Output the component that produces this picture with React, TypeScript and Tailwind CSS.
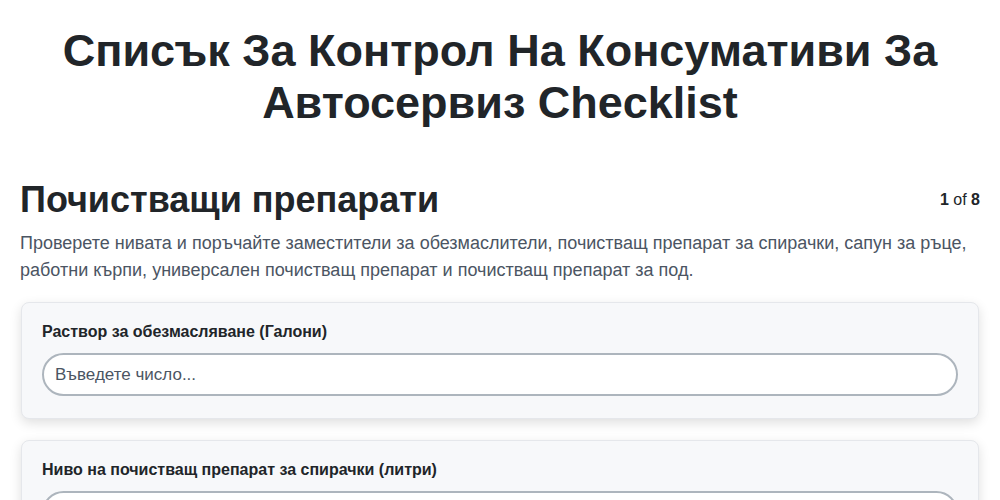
import React from "react";

function Field({ label }: { label: string }) {
  return (
    <div className="rounded-lg border border-[#e5e7eb] bg-[#f7f8fa] px-5 pt-[18px] pb-[22px] shadow-[0_4px_12px_rgba(0,0,0,0.13)]">
      <label className="block text-[16px] font-bold text-[#212529] leading-[22px] mb-[10px]">{label}</label>
      <input
        type="text"
        placeholder="Въведете число..."
        className="w-full h-[43px] rounded-full border-2 border-[#adb5bd] bg-white px-[11px] text-[17px] text-[#212529] placeholder:text-[#4b5563] outline-none"
      />
    </div>
  );
}

export default function App() {
  return (
    <div className="min-h-screen bg-white text-[#212529]" style={{ fontFamily: '"Liberation Sans", Arial, sans-serif' }}>
      <h1 className="pt-[25px] px-12 text-center text-[45px] font-bold leading-[52px]">
        Списък За Контрол На Консумативи За Автосервиз Checklist
      </h1>
      <div className="px-5 pt-[49px]">
        <div className="flex items-center justify-between">
          <h2 className="text-[36px] font-bold leading-[44px]">Почистващи препарати</h2>
          <div className="text-[16px] text-[#212529]"><b>1</b> of <b>8</b></div>
        </div>
        <p className="mt-[8px] text-[18px] leading-[27px] text-[#4b5563]">
          Проверете нивата и поръчайте заместители за обезмаслители, почистващ препарат за спирачки, сапун за ръце, работни кърпи, универсален почистващ препарат и почистващ препарат за под.
        </p>
        <div className="mt-[18px] px-px flex flex-col gap-[21px] pb-10">
          <Field label="Раствор за обезмасляване (Галони)" />
          <Field label="Ниво на почистващ препарат за спирачки (литри)" />
        </div>
      </div>
    </div>
  );
}
